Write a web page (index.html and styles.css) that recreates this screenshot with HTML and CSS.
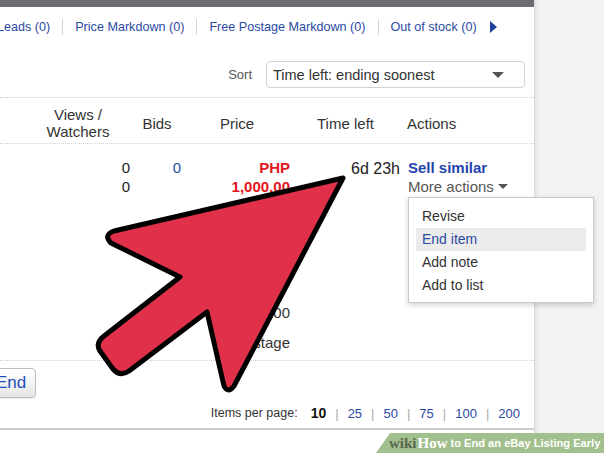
FILE: index.html
```html
<!DOCTYPE html>
<html>
<head>
<meta charset="utf-8">
<link rel="stylesheet" href="styles.css">
</head>
<body>
<div class="page">
  <div class="main">
    <div class="topbar"></div>
    <nav class="tabs">
      <a class="tab first">Leads (0)</a>
      <span class="sep"></span>
      <a class="tab">Price Markdown (0)</a>
      <span class="sep"></span>
      <a class="tab">Free Postage Markdown (0)</a>
      <span class="sep"></span>
      <a class="tab">Out of stock (0)</a>
      <span class="next"></span>
    </nav>
    <div class="sortrow">
      <span class="sortlabel">Sort</span>
      <div class="select"><span>Time left: ending soonest</span><span class="caret"></span></div>
    </div>
    <div class="grid head">
      <div></div>
      <div class="h-views">Views /<br>Watchers</div>
      <div class="h-bids">Bids</div>
      <div class="h-price">Price</div>
      <div class="h-time">Time left</div>
      <div class="h-actions">Actions</div>
    </div>
    <div class="grid row">
      <div></div>
      <div class="c-views">0<br>0</div>
      <div class="c-bids">0</div>
      <div class="c-price">
        <div class="red">PHP</div>
        <div class="red">1,000.00</div>
        <div class="bin">1,000.00</div>
        <div class="post">postage</div>
      </div>
      <div class="c-time">6d 23h</div>
      <div class="c-actions">
        <div class="sell">Sell similar</div>
        <div class="more">More actions <span class="mcaret"></span></div>
      </div>
    </div>
    <div class="endrow"><button class="endbtn">End</button></div>
    <div class="pager">
      <span class="ipp">Items per page:</span>
      <b class="cur">10</b><i>|</i><a>25</a><i>|</i><a>50</a><i>|</i><a>75</a><i>|</i><a>100</a><i>|</i><a>200</a>
    </div>
  </div>
  <div class="side"></div>

  <ul class="menu">
    <li>Revise</li>
    <li class="active">End item</li>
    <li>Add note</li>
    <li>Add to list</li>
  </ul>

  <svg class="arrow" width="604" height="453" viewBox="0 0 604 453">
    <path d="M343,178 L114,231 Q103,235 111,243 L180,277 L104,336 Q95,343 100,351 L113,369 Q120,377 129,371 L207,312 L224,386 Q228,394 234,386 Z" fill="#e1304a" stroke="#000" stroke-width="5" stroke-linejoin="round"/>
  </svg>

  <div class="wm"><span class="wiki">wiki</span><span class="how">How</span><span class="title">to End an eBay Listing Early</span></div>
</div>
</body>
</html>
```

FILE: styles.css
```css
* { box-sizing: border-box; }
html, body { margin: 0; padding: 0; }
body {
  width: 604px;
  height: 453px;
  overflow: hidden;
  background: #fff;
  font-family: "Liberation Sans", Arial, Helvetica, sans-serif;
  color: #333;
}
.page {
  position: relative;
  display: flex;
  width: 604px;
  height: 453px;
}
.main {
  width: 535px;
  height: 453px;
  background: #fff;
  border-right: 1px solid #dadada;
  overflow: hidden;
}
.side {
  flex: 1;
  background: #f2f2f2;
  box-shadow: inset 3px 0 4px -2px rgba(0,0,0,0.08);
}
.topbar {
  height: 7px;
  background: #6c6c71;
}
.tabs {
  height: 40px;
  display: flex;
  align-items: center;
  margin-left: -3px;
  font-size: 12.6px;
  color: #2c4aa2;
}
.tab { white-space: nowrap; }
.sep {
  width: 1px;
  height: 16px;
  background: #d4d4d4;
  margin: 0 12px;
}
.next {
  width: 0; height: 0;
  margin-left: 13px;
  border-top: 6px solid transparent;
  border-bottom: 6px solid transparent;
  border-left: 7px solid #1e3f9c;
}
.sortrow {
  display: flex;
  align-items: center;
  justify-content: flex-end;
  padding: 14px 9px 9px 0;
  border-bottom: 1px dotted #cfcfcf;
}
.sortlabel {
  font-size: 13px;
  color: #555;
  margin-right: 14px;
}
.select {
  width: 259px;
  height: 27px;
  border: 1px solid #d2d2d2;
  border-radius: 4px;
  display: flex;
  align-items: center;
  justify-content: space-between;
  padding: 0 20px 0 6px;
  font-size: 14.5px;
  color: #333;
}
.caret {
  width: 0; height: 0;
  border-left: 6px solid transparent;
  border-right: 6px solid transparent;
  border-top: 6px solid #555;
}
.grid {
  display: grid;
  grid-template-columns: 40px 92px 50px 110px 110px 133px;
}
.head {
  height: 46px;
  padding-top: 5px;
  font-size: 15px;
  line-height: 17px;
  color: #333;
  border-bottom: 1px dotted #cfcfcf;
  align-items: center;
}
.h-views { text-align: center; padding-right: 16px; }
.h-bids { text-align: center; }
.h-price { text-align: center; }
.h-time { text-align: center; padding-right: 3px; }
.h-actions { padding-left: 5px; }
.row {
  height: 217px;
  padding-top: 14px;
  font-size: 15px;
  line-height: 19px;
  border-bottom: 1px dotted #cfcfcf;
  align-items: start;
}
.c-views { text-align: right; padding-right: 2px; color: #222; }
.c-bids { text-align: right; padding-right: 1px; color: #2c4aa2; }
.c-price { text-align: right; padding-right: 2px; }
.red { color: #e3161d; font-weight: bold; }
.bin { margin-top: 107px; color: #333; }
.post { margin-top: 11px; color: #333; }
.c-time { text-align: right; padding-right: 2px; color: #222; font-size: 16px; margin-top: 1px; }
.c-actions { padding-left: 6px; }
.sell { color: #1f45ad; font-weight: bold; }
.more { color: #555; display: flex; align-items: center; }
.mcaret {
  display: inline-block;
  width: 0; height: 0;
  margin-left: 4px;
  border-left: 5px solid transparent;
  border-right: 5px solid transparent;
  border-top: 5px solid #555;
}
.endrow { padding-top: 7px; height: 38px; }
.endbtn {
  margin-left: -14px;
  height: 30px;
  padding: 0 9px 0 9px;
  border: 1px solid #bcbcbc;
  border-radius: 4px;
  background: linear-gradient(#ffffff, #e6e6e6);
  font-family: "Liberation Sans", Arial, sans-serif;
  font-size: 17px;
  color: #1f4fbf;
  box-shadow: 0 1px 1px rgba(0,0,0,0.08);
}
.pager {
  display: flex;
  align-items: center;
  justify-content: flex-end;
  height: 31px;
  padding-right: 14px;
  padding-bottom: 1px;
  border-bottom: 2px solid #cfcfcf;
  font-size: 13px;
  color: #333;
}
.ipp { margin-right: 13px; font-size: 12.5px; }
.cur { color: #111; font-size: 14px; }
.pager i { font-style: normal; color: #aaa; margin: 0 9px; }
.pager a { color: #2c4aa2; }
.menu {
  position: absolute;
  left: 408px;
  top: 197px;
  width: 186px;
  height: 106px;
  margin: 0;
  padding: 7px 7px 0 7px;
  list-style: none;
  background: #fff;
  border: 1px solid #c9c9c9;
  box-shadow: 0 2px 5px rgba(0,0,0,0.18);
  font-size: 14px;
  color: #333;
}
.menu li {
  height: 23px;
  line-height: 23px;
  padding-left: 6px;
}
.menu li.active {
  background: #ececec;
  color: #2c4aa2;
}
.arrow {
  position: absolute;
  left: 0;
  top: 0;
  pointer-events: none;
}
.wm {
  position: absolute;
  left: 376px;
  top: 433px;
  width: 228px;
  height: 20px;
  padding-left: 13px;
  background: #a2c08d;
  clip-path: polygon(14px 0, 100% 0, 100% 100%, 0 100%);
  display: flex;
  align-items: center;
  white-space: nowrap;
}
.wiki {
  font-family: "Liberation Serif", "Times New Roman", serif;
  font-weight: bold;
  color: #5a6750;
  font-size: 15px;
  margin-right: 1px;
}
.how {
  font-family: "Liberation Serif", "Times New Roman", serif;
  font-weight: bold;
  font-size: 15px;
  color: #fff;
  margin-right: 3px;
}
.title {
  font-family: "Liberation Sans", Arial, sans-serif;
  font-weight: bold;
  font-size: 11.1px;
  color: #fff;
}
```
